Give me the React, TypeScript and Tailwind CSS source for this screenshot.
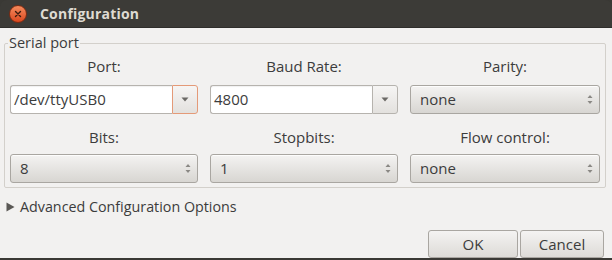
import React from 'react';

function ArrowDown() {
  return (
    <svg width="8" height="5" viewBox="0 0 8 5">
      <path d="M0.5 0.5h7L4 4.5z" fill="#6b6966" />
    </svg>
  );
}

function UpDown() {
  return (
    <svg width="6" height="11" viewBox="0 0 6 11">
      <path d="M0.5 4L3 1l2.5 3z" fill="#8a8884" />
      <path d="M0.5 7L3 10l2.5-3z" fill="#8a8884" />
    </svg>
  );
}

function EntryCombo({ value, focused }: { value: string; focused?: boolean }) {
  return (
    <div className="flex h-[29px]">
      <div className="flex-1 flex items-center pl-[3px] bg-white border border-[#b6b3ae] border-r-0 rounded-l-[3px] text-[15px] text-[#3c3c3c] shadow-[inset_0_1px_1px_rgba(0,0,0,0.06)]">
        {value}
      </div>
      <div
        className={
          focused
            ? 'w-[26px] flex items-center justify-center rounded-r-[3px] border border-[#e49a78] bg-gradient-to-b from-[#f6f5f4] to-[#e3e1de]'
            : 'w-[26px] flex items-center justify-center rounded-r-[3px] border border-[#b6b3ae] bg-gradient-to-b from-[#f6f5f4] to-[#e3e1de]'
        }
      >
        <ArrowDown />
      </div>
    </div>
  );
}

function ButtonCombo({ value }: { value: string }) {
  return (
    <div className="flex items-center justify-between h-[29px] px-[9px] rounded-[3px] border border-[#a9a6a1] bg-gradient-to-b from-[#f4f3f2] to-[#d8d6d2] text-[15px] text-[#3c3c3c] shadow-[inset_0_1px_0_rgba(255,255,255,0.8)]">
      <span>{value}</span>
      <span className="mr-[-3px]">
        <UpDown />
      </span>
    </div>
  );
}

function Field({ label, gap, children }: { label: string; gap: string; children: React.ReactNode }) {
  return (
    <div className="flex flex-col">
      <div className="h-[20px] leading-[20px] text-center text-[15px] text-[#3c3c3c]">{label}</div>
      <div className={gap}>{children}</div>
    </div>
  );
}

export default function App() {
  return (
    <div
      className="w-[612px] h-[260px] flex flex-col bg-[#3a3935]"
      style={{ fontFamily: '"Open Sans", "DejaVu Sans", sans-serif' }}
    >
      {/* Title bar */}
      <div className="h-[29px] flex items-center pl-[9px] bg-[#3c3b37] rounded-t-[7px] border-b border-[#2f2e2b]">
        <div className="w-[18px] h-[18px] rounded-full bg-gradient-to-b from-[#f58a5c] to-[#d9461c] border border-[#7e2b12] flex items-center justify-center">
          <svg width="8" height="8" viewBox="0 0 8 8">
            <path d="M1.5 1.5l5 5M6.5 1.5l-5 5" stroke="#3a1b0e" strokeWidth="1.4" strokeLinecap="round" />
          </svg>
        </div>
        <span className="ml-[13px] text-[14px] font-bold text-[#dfdbd2] tracking-[0.2px]">Configuration</span>
      </div>

      {/* Body */}
      <div className="flex-1 flex flex-col bg-[#f2f1f0] mb-[2px]">
        <fieldset className="mt-[7px] ml-[4px] mr-[6px] px-[5px] pb-[4px] pt-[5px] border border-[#d3d0cb] rounded-[2px]">
          <legend className="ml-[-2px] px-[1px] text-[14.5px] leading-[16px] text-[#3c3c3c]">Serial port</legend>
          <div className="grid grid-cols-[188px_188px_190px] gap-x-[12px]">
            <Field label="Port:" gap="mt-[9px]">
              <EntryCombo value="/dev/ttyUSB0" focused />
            </Field>
            <Field label="Baud Rate:" gap="mt-[9px]">
              <EntryCombo value="4800" />
            </Field>
            <Field label="Parity:" gap="mt-[9px]">
              <ButtonCombo value="none" />
            </Field>
          </div>
          <div className="grid grid-cols-[188px_188px_190px] gap-x-[12px] mt-[13px]">
            <Field label="Bits:" gap="mt-[7px]">
              <ButtonCombo value="8" />
            </Field>
            <Field label="Stopbits:" gap="mt-[7px]">
              <ButtonCombo value="1" />
            </Field>
            <Field label="Flow control:" gap="mt-[7px]">
              <ButtonCombo value="none" />
            </Field>
          </div>
        </fieldset>

        {/* Expander */}
        <div className="flex items-center mt-[9px] pl-[6px] h-[20px]">
          <svg width="9" height="10" viewBox="0 0 9 10">
            <path d="M0.5 0.5L8.5 5L0.5 9.5z" fill="#5a5855" />
          </svg>
          <span className="ml-[5px] text-[14.3px] text-[#3c3c3c]">Advanced Configuration Options</span>
        </div>

        {/* Buttons */}
        <div className="flex justify-end gap-[2px] mt-[13px] pr-[8px]">
          <button className="w-[90px] h-[28px] rounded-[3px] border border-[#a9a6a1] bg-gradient-to-b from-[#f4f3f2] to-[#dddbd7] text-[15px] text-[#3c3c3c]">
            OK
          </button>
          <button className="w-[84px] h-[28px] rounded-[3px] border border-[#a9a6a1] bg-gradient-to-b from-[#f4f3f2] to-[#dddbd7] text-[15px] text-[#3c3c3c]">
            Cancel
          </button>
        </div>
      </div>
    </div>
  );
}
